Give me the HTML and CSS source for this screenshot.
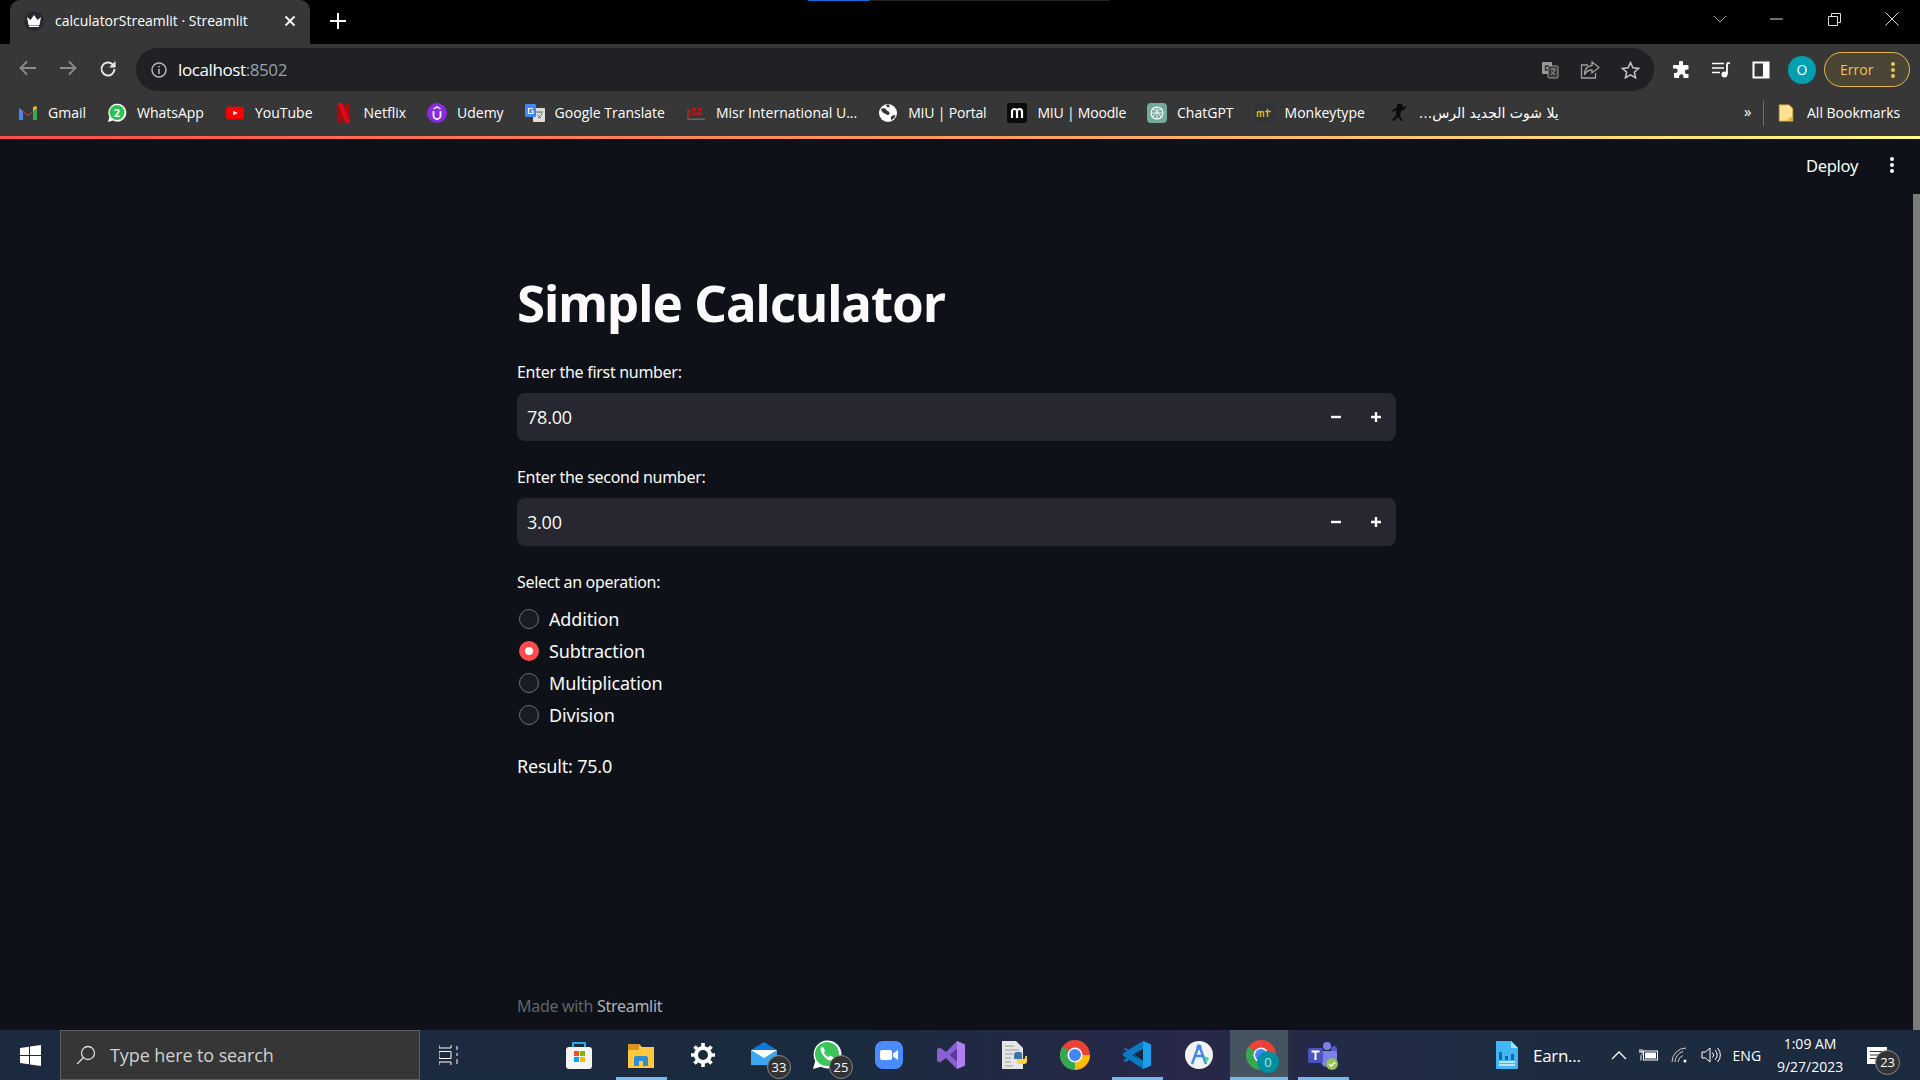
FILE: index.html
```html
<!DOCTYPE html>
<html lang="en">
  <head>
    <meta charset="utf-8" />
    <meta name="viewport" content="width=device-width, initial-scale=1" />
    <title>calculatorStreamlit · Streamlit</title>
    <link rel="stylesheet" href="styles.css">
  </head>
  <body>
    <div class="screen">

      <!-- browser tabs -->
      <div class="tabstrip">
        <div class="loadbar"><span class="loadbar-on"></span></div>
        <div class="tab">
          <span class="tab-icon">
            <svg width="16" height="14" viewBox="0 0 16 14"><path d="M1 3l3.500 3L8 1l3.500 5L15 3l-1.500 8h-11z" fill="#fff"/><rect x="3" y="11.500" width="10" height="1.500" fill="#fff"/></svg>
          </span>
          <span class="tab-title">calculatorStreamlit · Streamlit</span>
          <svg class="tab-close" width="12" height="12" viewBox="0 0 12 12"><path d="M1.500 1.500l9 9M10.500 1.500l-9 9" stroke="#fff" stroke-width="1.800"/></svg>
        </div>
        <svg class="tab-new" width="16" height="16" viewBox="0 0 16 16"><path d="M8 0v16M0 8h16" stroke="#fff" stroke-width="2"/></svg>
        <div class="win-btns">
          <svg class="win-chevron" width="14" height="8" viewBox="0 0 14 8"><path d="M1 1l6 6 6-6" fill="none" stroke="#a0a0a0"/></svg>
          <svg class="win-min" width="13" height="2" viewBox="0 0 13 2"><path d="M0 1h13" stroke="#ddd"/></svg>
          <svg class="win-max" width="13" height="13" viewBox="0 0 13 13"><path d="M.5 3.500h9v9h-9zM3.500 3.500v-3h9v9h-3" fill="none" stroke="#ddd"/></svg>
          <svg class="win-close" width="14" height="14" viewBox="0 0 14 14"><path d="M.5.500l13 13M13.500.500l-13 13" stroke="#ddd"/></svg>
        </div>
      </div>

      <!-- address bar -->
      <div class="toolbar">
        <svg class="nav-btn" width="18" height="16" viewBox="0 0 18 16"><path d="M17 8H2M8 1.500L1.500 8 8 14.500" fill="none" stroke="#8b8b8b" stroke-width="1.800"/></svg>
        <svg class="nav-btn" width="18" height="16" viewBox="0 0 18 16"><path d="M1 8h15M10 1.500L16.500 8 10 14.500" fill="none" stroke="#8b8b8b" stroke-width="1.800"/></svg>
        <svg class="nav-btn" width="18" height="18" viewBox="0 0 18 18"><path d="M15.500 9a6.500 6.500 0 1 1-1.900-4.600L16 6.500" fill="none" stroke="#e8e8e8" stroke-width="1.900"/><path d="M16.500 1v6.500H10z" fill="#e8e8e8"/></svg>
        <div class="omnibox">
          <svg class="omni-info" width="16" height="16" viewBox="0 0 16 16"><circle cx="8" cy="8" r="7" fill="none" stroke="#b5b5b5" stroke-width="1.500"/><path d="M8 7v5M8 4v1.600" stroke="#b5b5b5" stroke-width="1.600"/></svg>
          <span class="omni-url">localhost<span class="omni-port">:8502</span></span>
          <div class="omni-actions">
            <svg width="18" height="18" viewBox="0 0 18 18"><rect x="1" y="1" width="10" height="12" rx="1" fill="#9a9a9a"/><rect x="7" y="5" width="10" height="12" rx="1" fill="#3a3a3a" stroke="#9a9a9a"/><path d="M9.500 8h5M12 8v1M14 8.500c-.5 2-2 4-4 5M10.500 10.500c.8 1.400 2 2.500 3.500 3" fill="none" stroke="#9a9a9a"/><path d="M8 5H4.500v4H7" fill="none" stroke="#333" stroke-width="1.400"/></svg>
            <svg width="20" height="18" viewBox="0 0 20 18"><path d="M8 4H1.500v13h14v-5" fill="none" stroke="#9f9f9f" stroke-width="1.300"/><path d="M12 1l7 5.500-7 5.500V9C8 9 6 10.500 4.500 14c0-5 2.500-9 7.500-9.500z" fill="none" stroke="#9f9f9f" stroke-width="1.300"/></svg>
            <svg width="19" height="18" viewBox="0 0 19 18"><path d="M9.500 1.500l2.400 5.300 5.700.6-4.300 3.800 1.300 5.600-5.100-3-5.100 3 1.300-5.600L1.400 7.400l5.700-.6z" fill="none" stroke="#c4c4c4" stroke-width="1.500"/></svg>
          </div>
        </div>
        <div class="tool-icons">
          <svg width="18" height="18" viewBox="0 0 18 18"><path d="M7 1.500a2 2 0 0 1 4 0V4h4.500a1 1 0 0 1 1 1v3.500H15a2.200 2.200 0 0 0 0 4.400h1.500V16a1 1 0 0 1-1 1H11.500v-1.500a2.200 2.200 0 0 0-4.400 0V17H3a1 1 0 0 1-1-1v-4H3.500a2.200 2.200 0 0 0 0-4.400H1V5a1 1 0 0 1 1-1h5z" fill="#fff"/></svg>
          <svg width="20" height="16" viewBox="0 0 20 16"><path d="M1 1.500h12M1 6h12M1 10.500h8" stroke="#fff" stroke-width="1.600"/><path d="M16 2v10" stroke="#fff" stroke-width="1.800"/><path d="M15.500 1.200H19" stroke="#fff" stroke-width="1.800"/><circle cx="13.500" cy="12.500" r="3" fill="#fff"/></svg>
          <svg width="18" height="18" viewBox="0 0 18 18"><rect x="1.500" y="1.500" width="15" height="15" fill="none" stroke="#fff" stroke-width="2"/><rect x="11" y="1" width="6" height="16" fill="#fff"/></svg>
          <span class="avatar">O</span>
          <span class="error-pill">Error<span class="error-dots"><i></i><i></i><i></i></span></span>
        </div>
      </div>

      <!-- bookmarks -->
      <div class="bookmarks">
        <div class="bm-list">
          <span class="bm">
            <svg class="bm-icon" viewBox="0 0 20 16"><path d="M1 15V3l9 7 9-7v12h-4V7l-5 4-5-4v8z" fill="#ea4335"/><path d="M1 15V3l4 3.200V15z" fill="#4285f4"/><path d="M15 15V6.200L19 3v12z" fill="#34a853"/><path d="M15 6.200L19 3V2l-2-1-2 1.500z" fill="#fbbc04"/></svg>
            Gmail
          </span>
          <span class="bm">
            <svg class="bm-icon" viewBox="0 0 20 20"><path d="M1 19l1.400-5A9 9 0 1 1 6 17.600z" fill="#fff"/><circle cx="10" cy="9.500" r="7.500" fill="#2dc24c"/><text x="10" y="13.500" class="bm-num">2</text></svg>
            WhatsApp
          </span>
          <span class="bm">
            <svg class="bm-icon" viewBox="0 0 22 20"><rect x="1" y="3" width="20" height="14" rx="4" fill="#f00"/><path d="M9 7.500l5 2.500-5 2.500z" fill="#fff"/></svg>
            YouTube
          </span>
          <span class="bm">
            <svg class="bm-icon" viewBox="0 0 20 20"><path d="M4 0h4.500v20L4 19.500z" fill="#b1060f"/><path d="M11.500 0H16v19.500L11.500 20z" fill="#b1060f"/><path d="M4 0h4.500l7.500 19.500-4.500.5z" fill="#e50914"/></svg>
            Netflix
          </span>
          <span class="bm">
            <svg class="bm-icon" viewBox="0 0 20 20"><circle cx="10" cy="10" r="10" fill="#8a2be2"/><path d="M6.500 8v4.500a3.500 3.500 0 0 0 7 0V8" fill="none" stroke="#fff" stroke-width="1.800"/><path d="M6.500 6L10 3.800 13.500 6" fill="none" stroke="#fff" stroke-width="1.400"/></svg>
            Udemy
          </span>
          <span class="bm">
            <svg class="bm-icon" viewBox="0 0 20 20"><rect x="8" y="5" width="12" height="14" rx="1" fill="#ddd"/><rect x="0" y="1" width="11" height="13" rx="1" fill="#4285f4"/><path d="M8 5.500H3.500v5H8V8H6" fill="none" stroke="#fff" stroke-width="1.200"/><path d="M11 9h7M14.500 9v1M17 10c-.6 2-2 3.500-4 5M12.500 11.500c.8 1.400 2 2.600 3.500 3.500" fill="none" stroke="#666"/></svg>
            Google Translate
          </span>
          <span class="bm">
            <svg class="bm-icon" viewBox="0 0 20 20"><path d="M1 6h3v9H1zM6 5h4v3H6zM12 5h4v3h-4zM6 9.500h10v2.500H6z" fill="#b3161d"/><path d="M1 15.500h18v1.500H1z" fill="#666"/></svg>
            Misr International U...
          </span>
          <span class="bm bm-tight">
            <svg class="bm-icon" viewBox="0 0 20 20"><circle cx="10" cy="10" r="9" fill="#fff"/><path d="M3 6c2-1 4-1 5 .5s3 1.500 3.500 3.500-2 2.500-3 1.500S4 10.500 3 6zM13 14c1-1.500 3-2 4.500-1.500-.8 2-2 3.500-3.500 4.300-1 .5-1.500-1.500-1-2.800zM10 1.200c1.500 1 2 2 1.200 3-1 .3-2.500 0-3-2z" fill="#333"/></svg>
            MIU | Portal
          </span>
          <span class="bm bm-tight">
            <svg class="bm-icon" viewBox="0 0 20 20"><rect width="20" height="20" rx="2" fill="#0b0b0b"/><path d="M5 15V8.500a1.800 1.800 0 0 1 5 0V15M10 8.500a1.800 1.800 0 0 1 5 0V15" fill="none" stroke="#fff" stroke-width="2.200"/></svg>
            MIU | Moodle
          </span>
          <span class="bm">
            <svg class="bm-icon" viewBox="0 0 20 20"><rect width="20" height="20" rx="4" fill="#74aa9c"/><circle cx="10" cy="10" r="6" fill="none" stroke="#fff" stroke-width="1.100"/><path d="M6 6c3 1 6 4 8 8M14 6c-3 1-6 4-8 8M10 4v12M4.500 10h11" fill="none" stroke="#fff" stroke-width=".8"/></svg>
            ChatGPT
          </span>
          <span class="bm">
            <svg class="bm-icon" viewBox="0 0 20 20"><rect width="20" height="20" rx="3" fill="#323437"/><path d="M2.500 14V8.500M2.500 9.500c1-1.500 3-1.500 3 .5v4M5.500 9.500c1-1.500 3-1.500 3 .5v4M12.500 6v8M10 8.500h6" fill="none" stroke="#e2b714" stroke-width="1.400"/></svg>
            Monkeytype
          </span>
          <span class="bm bm-yalla">
            <svg class="bm-icon" viewBox="0 0 20 20"><path d="M8 1h5l1 3 4-1-3 4-3 1-1 5 3 5h-2l-3-4-4 4-2-1 4-5V7L4 9 3 7.500 8 4z" fill="#0c0c0c"/></svg>
            <span class="bm-ar" dir="rtl">يلا شوت الجديد الرس...</span>
          </span>
        </div>
        <span class="bm-more">»</span>
        <span class="bm-sep"></span>
        <span class="bm bm-all">
          <svg class="bm-icon" viewBox="0 0 20 20"><path d="M2.500 1h11l4 4v14h-15z" fill="#fde293" stroke="#d9a93a"/><path d="M13 15h4v4h-4z" fill="#e5b53f"/></svg>
          All Bookmarks
        </span>
      </div>

      <div class="rainbow"></div>

      <!-- the streamlit app -->
      <div class="app">
        <div class="app-header">
          <span class="deploy">Deploy</span>
          <span class="kebab"><i></i><i></i><i></i></span>
        </div>
        <div class="block">
          <h1 class="app-title">Simple Calculator</h1>

          <div class="field">
            <label class="field-label">Enter the first number:</label>
            <div class="num-input">
              <span class="num-value">78.00</span>
              <span class="step"><svg width="10" height="10" viewBox="0 0 10 10"><path d="M0 5h10" stroke="#fafafa" stroke-width="2.400"/></svg></span>
              <span class="step"><svg width="10" height="10" viewBox="0 0 10 10"><path d="M0 5h10M5 0v10" stroke="#fafafa" stroke-width="2.400"/></svg></span>
            </div>
          </div>

          <div class="field">
            <label class="field-label">Enter the second number:</label>
            <div class="num-input">
              <span class="num-value">3.00</span>
              <span class="step"><svg width="10" height="10" viewBox="0 0 10 10"><path d="M0 5h10" stroke="#fafafa" stroke-width="2.400"/></svg></span>
              <span class="step"><svg width="10" height="10" viewBox="0 0 10 10"><path d="M0 5h10M5 0v10" stroke="#fafafa" stroke-width="2.400"/></svg></span>
            </div>
          </div>

          <div class="field">
            <label class="field-label">Select an operation:</label>
            <div class="radios">
              <div class="radio"><span class="radio-dot"></span>Addition</div>
              <div class="radio radio-on"><span class="radio-dot"></span>Subtraction</div>
              <div class="radio"><span class="radio-dot"></span>Multiplication</div>
              <div class="radio"><span class="radio-dot"></span>Division</div>
            </div>
          </div>

          <p class="result">Result: 75.0</p>
        </div>
        <div class="app-footer">Made with <span class="footer-brand">Streamlit</span></div>
        <div class="scroll-thumb"></div>
      </div>

      <!-- windows taskbar -->
      <div class="taskbar">
        <div class="start">
          <svg width="21" height="21" viewBox="0 0 21 21"><path d="M0 3l9-1.300V10H0zM10 1.500L21 0v10H10zM0 11h9v8.300L0 18zM10 11h11v10l-11-1.500z" fill="#fff"/></svg>
        </div>
        <div class="search">
          <svg width="20" height="20" viewBox="0 0 20 20"><circle cx="12" cy="8" r="6.500" fill="none" stroke="#ddd" stroke-width="1.300"/><path d="M7.500 12.500L1 19" stroke="#ddd" stroke-width="1.300"/></svg>
          <span>Type here to search</span>
        </div>
        <div class="taskview">
          <svg width="20" height="20" viewBox="0 0 20 20"><path d="M0 3h12M0 17h12M0 6.500h12v7H0zM0 0v3M12 0v3M0 17v3M12 17v3M18 1v4M18 8v3M18 14v5" fill="none" stroke="#fff"/></svg>
        </div>
        <div class="apps">
          <div class="app-slot">
            <svg width="30" height="30" viewBox="0 0 30 30"><path d="M9 8V3h12v5" fill="none" stroke="#29a8f0" stroke-width="2"/><rect x="2" y="7" width="26" height="22" rx="3" fill="#f5f5f5"/><rect x="10" y="11" width="5" height="5" fill="#f25022"/><rect x="16" y="11" width="5" height="5" fill="#7fba00"/><rect x="10" y="17" width="5" height="5" fill="#00a4ef"/><rect x="16" y="17" width="5" height="5" fill="#ffb900"/></svg>
          </div>
          <div class="app-slot app-open">
            <svg width="30" height="30" viewBox="0 0 30 30"><path d="M2 4h11l3 3h12v21H2z" fill="#ffc83d"/><path d="M2 4h11v6H2z" fill="#d9961f"/><path d="M8 26v-8a2 2 0 0 1 2-2h10a2 2 0 0 1 2 2v8h-5v-5h-4v5z" fill="#2c8fd6"/></svg>
          </div>
          <div class="app-slot">
            <svg width="26" height="26" viewBox="0 0 26 26"><circle cx="13" cy="13" r="7" fill="none" stroke="#fff" stroke-width="4"/><path d="M13 1v5M13 20v5M1 13h5M20 13h5M4.500 4.500l3.500 3.500M18 18l3.500 3.500M21.500 4.500L18 8M8 18l-3.500 3.500" stroke="#fff" stroke-width="3.600"/></svg>
          </div>
          <div class="app-slot">
            <svg width="30" height="30" viewBox="0 0 30 30"><path d="M1 10L14 2l13 8v15H1z" fill="#0f78d4"/><path d="M1 10h26v15H1z" fill="#3aa8f0"/><path d="M1 10l13 8 13-8" fill="#fff"/></svg>
            <span class="tb-badge">33</span>
          </div>
          <div class="app-slot">
            <svg width="32" height="32" viewBox="0 0 32 32"><path d="M2 30l2.200-8A14 14 0 1 1 10 27.800z" fill="#fff"/><circle cx="16" cy="15" r="12" fill="#3bc55a"/><path d="M11 8c-2 1-2 4 1 8s6 6 8 5.500 3-3 2-3.500l-3-1.500-1.500 1.500c-2-1-3.500-2.500-4.500-4.500L14 12l-1.500-3.500z" fill="#fff"/></svg>
            <span class="tb-badge">25</span>
          </div>
          <div class="app-slot">
            <svg width="30" height="30" viewBox="0 0 30 30"><rect x="1" y="1" width="28" height="28" rx="8" fill="#4a8cff"/><rect x="6" y="10" width="12" height="10" rx="2" fill="#fff"/><path d="M19 13.500l5-3.500v10l-5-3.500z" fill="#fff"/></svg>
          </div>
          <div class="app-slot">
            <svg width="30" height="30" viewBox="0 0 30 30"><path d="M21 1l8 3.500v21L21 29 10 18l-6 4.500L1 21V9l3-1.500 6 4.500z" fill="#8a5fd0"/><path d="M21 9v12l-7-6z" fill="#2e2842"/><path d="M21 1l8 3.500v21L21 29z" fill="#b180f0"/><path d="M21 9v12l-7-6z" fill="#5d3aa0"/></svg>
          </div>
          <div class="app-slot">
            <svg width="30" height="30" viewBox="0 0 30 30"><path d="M4 1h14l7 7v21H4z" fill="#e6e6e6"/><path d="M7 6h9M7 10h14M7 14h8M7 18h6M7 22h6M7 26h8" stroke="#9a9a9a"/><path d="M16 19v-4a3 3 0 0 1 3-3h3a2 2 0 0 1 2 2v5h-6z" fill="#3776ab"/><path d="M29 16v5a3 3 0 0 1-3 3h-5a2 2 0 0 1-2-2v-3h6a2 2 0 0 0 2-3z" fill="#ffd43b"/></svg>
          </div>
          <div class="app-slot">
            <svg width="30" height="30" viewBox="0 0 30 30"><circle cx="15" cy="15" r="15" fill="#ea4335"/><path d="M15 15L2 22.500A15 15 0 0 0 15 30z" fill="#34a853"/><path d="M2 22.500A15 15 0 0 1 2.500 7L15 15z" fill="#34a853"/><path d="M15 15h15a15 15 0 0 1-15 15z" fill="#fbbc04"/><circle cx="15" cy="15" r="7.500" fill="#fff"/><circle cx="15" cy="15" r="6" fill="#4285f4"/></svg>
          </div>
          <div class="app-slot app-open">
            <svg width="30" height="30" viewBox="0 0 30 30"><path d="M21 1l8 3.500v21L21 29 3 17l-3-2.500L3 12z" fill="#0b7ac4"/><path d="M21 1l8 3.500v21L21 29z" fill="#1c9eeb"/><path d="M21 9v12l-11-6z" fill="#17263a"/><path d="M1 9.500l3-1.500 17 13v1L7 11zM1 20.500l3 1.500 7-5-2-2z" fill="#0b7ac4"/></svg>
          </div>
          <div class="app-slot">
            <svg width="30" height="30" viewBox="0 0 30 30"><circle cx="15" cy="15" r="14" fill="#f2f2f2"/><path d="M15 5L8 24M15 5l7 19M10 16h10" fill="none" stroke="#4285f4" stroke-width="2.400"/><circle cx="15" cy="7" r="2.500" fill="#4285f4"/><path d="M20 16l5 2-3 6z" fill="#3ddc84"/></svg>
          </div>
          <div class="app-slot app-active">
            <svg width="30" height="30" viewBox="0 0 30 30"><circle cx="15" cy="15" r="15" fill="#ea4335"/><path d="M15 15L2 22.500A15 15 0 0 0 15 30z" fill="#34a853"/><path d="M2 22.500A15 15 0 0 1 2.500 7L15 15z" fill="#34a853"/><path d="M15 15h15a15 15 0 0 1-15 15z" fill="#fbbc04"/><circle cx="15" cy="15" r="7.500" fill="#fff"/><circle cx="15" cy="15" r="6" fill="#4285f4"/></svg>
            <span class="tb-badge tb-badge-teal">0</span>
          </div>
          <div class="app-slot app-open">
            <svg width="32" height="30" viewBox="0 0 32 30"><circle cx="20" cy="6" r="4" fill="#7b83eb"/><circle cx="27" cy="9" r="3" fill="#5059c9"/><path d="M14 11h16v10a6 6 0 0 1-6 6h-4a6 6 0 0 1-6-6z" fill="#7b83eb"/><rect x="1" y="8" width="15" height="15" rx="2" fill="#4b53bc"/><path d="M4.500 11.500h8M8.500 11.500V20" stroke="#fff" stroke-width="2"/><circle cx="25" cy="24" r="6" fill="#92c353"/><path d="M22 24l2.200 2.200 4-4" fill="none" stroke="#fff" stroke-width="1.500"/></svg>
          </div>
        </div>
        <div class="earn">
          <svg width="24" height="30" viewBox="0 0 24 30"><path d="M2 1h14l7 7v20a1 1 0 0 1-1 1H2a1 1 0 0 1-1-1V2a1 1 0 0 1 1-1z" fill="#41b6f2"/><path d="M16 1l7 7h-7z" fill="#a6e1fb"/><path d="M4 12h3v8H4zM10 16h3v4h-3zM16 14h3v6h-3z" fill="#1565b0"/><path d="M4 22h16M4 25h16" stroke="#dff3fd" stroke-width="1.300"/></svg>
          <span>Earn...</span>
        </div>
        <div class="tray">
          <svg width="16" height="10" viewBox="0 0 16 10"><path d="M1 9l7-7 7 7" fill="none" stroke="#fff" stroke-width="1.300"/></svg>
          <svg width="20" height="14" viewBox="0 0 20 14"><rect x="4.500" y="3" width="14" height="9" fill="none" stroke="#fff"/><rect x="6" y="4.500" width="11" height="6" fill="#fff"/><path d="M1 1v3M3 1v3M0 4h4v1.500L2 7.500v5" fill="none" stroke="#fff"/></svg>
          <svg width="18" height="16" viewBox="0 0 18 16"><path d="M1 15A14 14 0 0 1 15 1M4 15A11 11 0 0 1 12 4.500M7 15a8 8 0 0 1 5-6.500" fill="none" stroke="#ccc"/><circle cx="14" cy="14" r="1.500" fill="#fff"/></svg>
          <svg width="20" height="16" viewBox="0 0 20 16"><path d="M1 5h3.500L9 1v14l-4.500-4H1z" fill="none" stroke="#fff"/><path d="M11.500 5.500a3.500 3.500 0 0 1 0 5M14 3a7 7 0 0 1 0 10M16.500 1a10 10 0 0 1 0 14" fill="none" stroke="#fff"/></svg>
          <span class="tray-lang">ENG</span>
          <div class="clock"><span>1:09 AM</span><span>9/27/2023</span></div>
          <div class="notif">
            <svg width="20" height="17" viewBox="0 0 20 17"><path d="M0 0h20v17H0z" fill="#fff"/><path d="M3 4.500h14M3 8h14M3 11.500h14" stroke="#333"/></svg>
            <span class="tb-badge tb-badge-notif">23</span>
          </div>
        </div>
      </div>
    </div>
  </body>
</html>
```

FILE: styles.css
```css
*{
  box-sizing: border-box;
}

html, body{
  margin: 0;
  height: 100%;
  background-color: #0e1117;
}

.screen{
  width: 1920px;
  height: 1080px;
  display: flex;
  flex-direction: column;
  overflow: hidden;
  font-family: "Open Sans", "Noto Sans", sans-serif;
  color: #fff;
}

/* tab strip */
.tabstrip{
  height: 44px;
  background-color: #000;
  display: flex;
  align-items: flex-end;
  padding-left: 10px;
  position: relative;
}

.loadbar{
  position: absolute;
  left: 808px;
  top: 0;
  width: 302px;
  height: 1px;
  background-color: #222;
}

.loadbar-on{
  display: block;
  width: 61px;
  height: 1px;
  background-color: #0a6fd8;
}

.tab{
  width: 300px;
  height: 44px;
  background-color: #373737;
  border-radius: 10px 10px 0 0;
  display: flex;
  align-items: center;
  padding: 0 14px 3px 14px;
}

.tab-icon{
  width: 20px;
  height: 20px;
  border-radius: 50%;
  background-color: #262730;
  display: flex;
  align-items: center;
  justify-content: center;
  margin-right: 11px;
}

.tab-title{
  flex: 1;
  font-size: 14px;
}

.tab-new{
  align-self: center;
  margin-left: 20px;
  margin-top: -2px;
}

.win-btns{
  margin-left: auto;
  align-self: center;
  display: flex;
  align-items: center;
  margin-right: 21px;
  margin-top: -6px;
}

.win-chevron{
  margin-right: 43px;
}

.win-min{
  margin-right: 45px;
}

.win-max{
  margin-right: 44px;
}

/* address bar */
.toolbar{
  height: 47px;
  background-color: #373737;
  display: flex;
  align-items: flex-start;
  padding-top: 4px;
  padding-left: 19px;
}

.nav-btn{
  margin-top: 12px;
  margin-right: 22px;
}

.omnibox{
  width: 1518px;
  height: 43px;
  margin-left: -3px;
  background-color: #202124;
  border-radius: 22px;
  display: flex;
  align-items: center;
  padding-left: 15px;
  padding-right: 14px;
}

.omni-url{
  font-size: 17px;
  letter-spacing: -0.4px;
  margin-left: 11px;
  color: #fff;
}

.omni-port{
  color: #9aa0a6;
}

.omni-actions{
  margin-left: auto;
  display: flex;
  align-items: center;
  gap: 21px;
}

.tool-icons{
  display: flex;
  align-items: center;
  height: 43px;
  margin-left: 18px;
}

.tool-icons svg{
  margin-right: 21px;
}

.avatar{
  width: 28px;
  height: 28px;
  margin-left: -3px;
  margin-right: 8px;
  border-radius: 50%;
  background-color: #00a0b0;
  display: flex;
  align-items: center;
  justify-content: center;
  font-size: 14px;
}

.error-pill{
  width: 86px;
  height: 35px;
  border: 1.500px solid #e8b84f;
  border-radius: 18px;
  background-color: #4b4535;
  color: #f0c35a;
  font-size: 14px;
  display: flex;
  align-items: center;
  padding-left: 15px;
  justify-content: space-between;
  padding-right: 14px;
}

.error-dots{
  display: flex;
  flex-direction: column;
  gap: 2px;
}

.error-dots i{
  width: 4px;
  height: 4px;
  border-radius: 50%;
  background-color: #f0c35a;
}

/* bookmarks */
.bookmarks{
  height: 45px;
  background-color: #373737;
  display: flex;
  align-items: center;
  padding-left: 18px;
  padding-bottom: 2px;
  font-size: 14px;
}

.bm-list{
  display: flex;
  align-items: center;
  gap: 21px;
  width: 1704px;
  flex-shrink: 0;
}

.bm{
  display: flex;
  align-items: center;
  gap: 10px;
  white-space: nowrap;
}

.bm-tight{
  letter-spacing: -0.2px;
}

.bm-yalla{
  margin-left: 3px;
}

.bm-icon{
  width: 20px;
  height: 20px;
  flex-shrink: 0;
}

.bm-num{
  font-size: 11px;
  font-weight: 700;
  text-anchor: middle;
  fill: #fff;
}

.bm-ar{
  font-family: "DejaVu Sans", sans-serif;
  font-size: 14px;
}

.bm-more{
  margin-left: 22px;
  font-size: 15px;
  width: 19px;
  margin-top: -3px;
}

.bm-sep{
  width: 1px;
  height: 26px;
  background-color: #6a6a6a;
}

.bm-all{
  margin-left: 13px;
  gap: 12px;
}

.bm-all .bm-icon{
  width: 18px;
}

.rainbow{
  height: 3px;
  background: linear-gradient(90deg, #ff4b4b, #ffa35c 55%, #fffd80);
}

/* streamlit app */
.app{
  flex: 1;
  background-color: #0e1117;
  position: relative;
  display: flex;
  flex-direction: column;
  font-family: "Noto Sans", sans-serif;
  color: #fafafa;
}

.app-header{
  display: flex;
  justify-content: flex-end;
  align-items: center;
  height: 54px;
  padding-right: 26px;
  padding-bottom: 2px;
}

.deploy{
  font-size: 16.500px;
  letter-spacing: -0.3px;
  margin-right: 32px;
}

.kebab{
  display: flex;
  flex-direction: column;
  gap: 2px;
}

.kebab i{
  width: 4px;
  height: 4px;
  border-radius: 50%;
  background-color: #fafafa;
}

.block{
  width: 879px;
  margin-left: 517px;
  flex: 1;
}

.app-title{
  margin: 78px 0 0 0;
  height: 65px;
  line-height: 62px;
  font-size: 51px;
  font-weight: 700;
  letter-spacing: -1px;
}

.field{
  margin-top: 24px;
}

.field-label{
  display: block;
  height: 33px;
  line-height: 24px;
  font-size: 16px;
  letter-spacing: -0.3px;
}

.num-input{
  height: 48px;
  background-color: #262730;
  border-radius: 8px;
  display: flex;
  align-items: center;
  padding-left: 10px;
}

.num-value{
  flex: 1;
  font-size: 18px;
  font-family: "Open Sans", sans-serif;
  letter-spacing: -0.2px;
}

.step{
  width: 40px;
  display: flex;
  justify-content: center;
}

.radios{
  display: flex;
  flex-direction: column;
}

.radio{
  height: 32px;
  display: flex;
  align-items: center;
  padding-left: 2px;
  font-size: 18px;
  letter-spacing: -0.15px;
}

.radio-dot{
  width: 20px;
  height: 20px;
  border-radius: 50%;
  background-color: #1a1c24;
  border: 1px solid #6f7076;
  margin-right: 10px;
  flex-shrink: 0;
}

.radio-on .radio-dot{
  border: 6px solid #ff4b4b;
  background-color: #fafafa;
}

.result{
  margin: 22px 0 0 0;
  font-size: 18px;
  line-height: 26px;
  letter-spacing: -0.2px;
}

.app-footer{
  margin-left: 517px;
  height: 24px;
  margin-bottom: 12px;
  line-height: 24px;
  font-size: 16px;
  letter-spacing: -0.3px;
  color: #62646b;
}

.footer-brand{
  color: #b0b2b8;
}

.scroll-thumb{
  position: absolute;
  right: 0;
  top: 55px;
  bottom: 0;
  width: 7px;
  background-color: #7c7c7c;
}

/* taskbar */
.taskbar{
  height: 50px;
  background: linear-gradient(90deg, #1b2a3e 0%, #1b2b3f 45%, #282849 62%, #1d2c41 78%, #1b2a3e 100%);
  display: flex;
  align-items: center;
  font-family: "Open Sans", sans-serif;
}

.taskbar > *{
  flex-shrink: 0;
}

.start{
  width: 60px;
  display: flex;
  justify-content: center;
}

.search{
  width: 360px;
  height: 50px;
  background-color: #363636;
  border: 1px solid #5f5f5f;
  display: flex;
  align-items: center;
  padding-left: 15px;
  gap: 14px;
  font-size: 18px;
  color: #d0d0d0;
  letter-spacing: -0.1px;
}

.taskview{
  width: 58px;
  display: flex;
  justify-content: center;
}

.apps{
  display: flex;
  margin-left: 70px;
  height: 50px;
}

.app-slot{
  width: 62px;
  height: 50px;
  display: flex;
  align-items: center;
  justify-content: center;
  position: relative;
}

.app-open::after{
  content: "";
  position: absolute;
  left: 6px;
  right: 5px;
  bottom: 0;
  height: 3px;
  background-color: #76b9ed;
}

.app-active{
  background: linear-gradient(90deg, #465361 58px, #2a2c44 58px);
}

.app-active::after{
  content: "";
  position: absolute;
  left: 0;
  right: 4px;
  bottom: 0;
  height: 3px;
  background-color: #76b9ed;
}

.tb-badge{
  position: absolute;
  right: 5px;
  bottom: 1px;
  width: 24px;
  height: 24px;
  border-radius: 50%;
  background-color: #333;
  border: 1px solid #8a8a8a;
  font-size: 13px;
  display: flex;
  align-items: center;
  justify-content: center;
}

.tb-badge-teal{
  background-color: #00909f;
  border-color: #00909f;
  right: 13px;
  bottom: 7px;
  width: 22px;
  height: 22px;
  color: #a8e4ea;
}

.earn{
  display: flex;
  align-items: center;
  margin-left: 141px;
  gap: 14px;
  font-size: 17px;
  letter-spacing: -0.3px;
}

.tray{
  display: flex;
  align-items: center;
  margin-left: 30px;
  flex: 1;
  gap: 12px;
}

.tray-lang{
  font-size: 14px;
}

.clock{
  display: flex;
  flex-direction: column;
  align-items: center;
  font-size: 14px;
  line-height: 23px;
  margin-left: -3px;
  width: 80px;
}

.notif{
  position: relative;
  margin-left: 5px;
  display: flex;
}

.tb-badge-notif{
  right: -13px;
  bottom: -11px;
  width: 25px;
  height: 25px;
}
```
